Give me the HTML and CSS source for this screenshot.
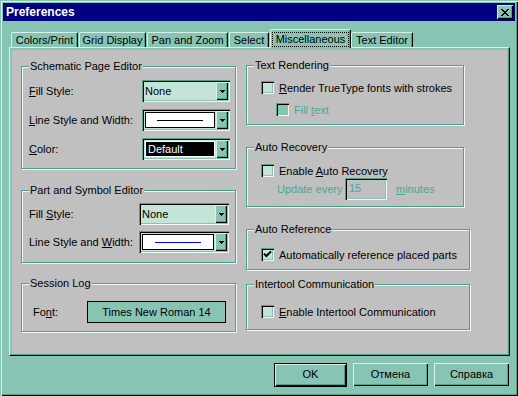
FILE: index.html
```html
<!DOCTYPE html>
<html>
<head>
  <meta charset="utf-8">
  <link rel="stylesheet" href="styles.css">
</head>
<body>
<div class="window">
  <div class="titlebar">
    <span class="title">Preferences</span>
    <span class="close">
      <svg width="8" height="7" viewBox="0 0 8 7" shape-rendering="crispEdges"><path d="M0 0h2v1h-2z M6 0h2v1h-2z M1 1h2v1h-2z M5 1h2v1h-2z M2 2h4v1h-4z M3 3h2v1h-2z M2 4h4v1h-4z M1 5h2v1h-2z M5 5h2v1h-2z M0 6h2v1h-2z M6 6h2v1h-2z" fill="#000"/></svg>
    </span>
  </div>

  <div class="tabs">
    <div class="tab t-colors">Colors/Print</div>
    <div class="tab t-grid">Grid Display</div>
    <div class="tab t-pan">Pan and Zoom</div>
    <div class="tab t-select">Select</div>
    <div class="tab active t-misc"><span class="focus">Miscellaneous</span></div>
    <div class="tab t-text">Text Editor</div>
  </div>

  <div class="panel">
    <div class="page">
      <div class="col col-left">
        <div class="group g-schematic">
          <div class="gtitle">Schematic Page Editor</div>
          <div class="field">
            <span><u>F</u>ill Style:</span>
            <div class="combo"><div class="combo-text">None</div><div class="drop"><svg width="5" height="3" shape-rendering="crispEdges"><path d="M0 0h5v1h-1v1h-1v1h-1v-1h-1v-1h-1z" fill="#000"/></svg></div></div>
          </div>
          <div class="field">
            <span><u>L</u>ine Style and Width:</span>
            <div class="combo"><div class="combo-line"><span class="line"></span></div><div class="drop"><svg width="5" height="3" shape-rendering="crispEdges"><path d="M0 0h5v1h-1v1h-1v1h-1v-1h-1v-1h-1z" fill="#000"/></svg></div></div>
          </div>
          <div class="field">
            <span><u>C</u>olor:</span>
            <div class="combo"><div class="combo-color">Default</div><div class="drop"><svg width="5" height="3" shape-rendering="crispEdges"><path d="M0 0h5v1h-1v1h-1v1h-1v-1h-1v-1h-1z" fill="#000"/></svg></div></div>
          </div>
        </div>

        <div class="group g-part">
          <div class="gtitle">Part and Symbol Editor</div>
          <div class="field">
            <span>Fill <u>S</u>tyle:</span>
            <div class="combo"><div class="combo-text">None</div><div class="drop"><svg width="5" height="3" shape-rendering="crispEdges"><path d="M0 0h5v1h-1v1h-1v1h-1v-1h-1v-1h-1z" fill="#000"/></svg></div></div>
          </div>
          <div class="field">
            <span>Line Style and <u>W</u>idth:</span>
            <div class="combo"><div class="combo-line"><span class="line line-blue"></span></div><div class="drop"><svg width="5" height="3" shape-rendering="crispEdges"><path d="M0 0h5v1h-1v1h-1v1h-1v-1h-1v-1h-1z" fill="#000"/></svg></div></div>
          </div>
        </div>

        <div class="group g-session">
          <div class="gtitle">Session Log</div>
          <div class="field">
            <span>Fo<u>n</u>t:</span>
            <div class="font-btn">Times New Roman 14</div>
          </div>
        </div>
      </div>

      <div class="col col-right">
        <div class="group g-render">
          <div class="gtitle">Text Rendering</div>
          <div class="check-row">
            <span class="check"></span>
            <span><u>R</u>ender TrueType fonts with strokes</span>
          </div>
          <div class="check-row sub disabled">
            <span class="check"></span>
            <span>Fill <u>t</u>ext</span>
          </div>
        </div>

        <div class="group g-recovery">
          <div class="gtitle">Auto Recovery</div>
          <div class="check-row">
            <span class="check"></span>
            <span>Enable <u>A</u>uto Recovery</span>
          </div>
          <div class="update-row disabled">
            <span class="update-label">Update every</span>
            <span class="edit">15</span>
            <span class="minutes"><u>m</u>inutes</span>
          </div>
        </div>

        <div class="group g-reference">
          <div class="gtitle">Auto Reference</div>
          <div class="check-row">
            <span class="check checked"><svg width="9" height="9" viewBox="0 0 9 9"><path d="M1 3.6 L3.4 6 L8 1.4" stroke="#000" stroke-width="2" fill="none"/></svg></span>
            <span>Automatically reference placed parts</span>
          </div>
        </div>

        <div class="group g-intertool">
          <div class="gtitle">Intertool Communication</div>
          <div class="check-row">
            <span class="check"></span>
            <span><u>E</u>nable Intertool Communication</span>
          </div>
        </div>
      </div>
    </div>
  </div>

  <div class="buttons">
    <div class="btn btn-default">OK</div>
    <div class="btn">Отмена</div>
    <div class="btn">Справка</div>
  </div>
</div>
</body>
</html>
```

FILE: styles.css
```css
body {
  margin: 0;
  background: #88c4b4;
  font-family: "Liberation Sans", Arial, sans-serif;
  font-size: 11px;
  color: #000;
  white-space: nowrap;
}

u {
  text-underline-offset: 1px;
}

.window {
  width: 518px;
  height: 396px;
  box-sizing: border-box;
  padding: 3px;
  background: #88c4b4;
  box-shadow: inset 1px 1px 0 #88c4b4, inset 2px 2px 0 #d8f0e8,
              inset -1px -1px 0 #000, inset -2px -2px 0 #48a48c;
}

/* title bar */
.titlebar {
  height: 18px;
  background: #000080;
  display: flex;
  align-items: center;
  justify-content: space-between;
  padding-left: 3px;
}

.title {
  color: #fff;
  font-weight: bold;
  font-size: 12px;
}

.close {
  width: 16px;
  height: 14px;
  margin-right: 2px;
  box-sizing: border-box;
  background: #88c4b4;
  display: flex;
  align-items: center;
  justify-content: center;
  box-shadow: inset 1px 1px 0 #d8f0e8, inset -1px -1px 0 #000, inset -2px -2px 0 #48a48c;
}

/* tabs */
.tabs {
  display: flex;
  align-items: flex-end;
  height: 26px;
  margin-left: 8px;
}

.tab {
  box-sizing: border-box;
  height: 15px;
  margin-right: 1px;
  border-top: 1px solid #d8f0e8;
  border-left: 1px solid #d8f0e8;
  border-right: 1px solid #000;
  border-radius: 2px 2px 0 0;
  box-shadow: inset -1px 0 0 #48a48c;
  text-align: center;
  line-height: 14px;
}

.t-colors { width: 67px; }
.t-grid { width: 67px; }
.t-pan { width: 81px; }
.t-select { width: 40px; }
.t-text { width: 62px; }

.tab.active {
  width: 81px;
  height: 19px;
  margin-right: 0;
  margin-bottom: -1px;
  padding-top: 2px;
  position: relative;
  z-index: 1;
  background: #88c4b4;
}

.focus {
  display: block;
  box-sizing: border-box;
  height: 15px;
  margin: 0 1px;
  border: 1px dotted #000;
  line-height: 12px;
}

/* tab page */
.panel {
  box-sizing: border-box;
  margin-left: 6px;
  width: 501px;
  height: 309px;
  border-top: 1px solid #d8f0e8;
  border-left: 1px solid #d8f0e8;
  border-right: 1px solid #000;
  border-bottom: 1px solid #000;
  padding: 2px 2px 1px 2px;
  box-shadow: inset -1px -1px 0 #48a48c;
}

.page {
  height: 100%;
  background: #c0c0c0;
  display: flex;
  padding-left: 9px;
}

.col {
  display: flex;
  flex-direction: column;
  align-items: flex-start;
}

.col-left { width: 215px; }
.col-right { margin-left: 10px; }

/* group boxes */
.group {
  box-sizing: border-box;
  display: flex;
  flex-direction: column;
  border: 1px solid #48a48c;
  box-shadow: inset 1px 1px 0 #eef8f4, 1px 1px 0 #eef8f4;
}

.gtitle {
  align-self: flex-start;
  margin: -8px 0 0 7px;
  padding: 0 1px;
  background: #c0c0c0;
  line-height: 14px;
}

.g-schematic { width: 215px; height: 103px; margin-top: 16px; }
.g-part { width: 215px; height: 73px; margin-top: 21px; }
.g-session { width: 215px; height: 49px; margin-top: 20px; }

.g-render { width: 218px; height: 60px; margin-top: 15px; }
.g-recovery { width: 218px; height: 60px; margin-top: 22px; }
.g-reference { width: 224px; height: 41px; margin-top: 22px; }
.g-intertool { width: 224px; height: 46px; margin-top: 14px; }

.field {
  display: flex;
  align-items: center;
  justify-content: space-between;
  height: 22px;
  padding: 0 5px 0 7px;
}

.g-schematic .field { margin-top: 7px; }
.g-schematic .field:first-of-type { margin-top: 8px; }
.g-part .field { margin-top: 6px; padding-right: 6px; }
.g-part .field:first-of-type { margin-top: 5px; }
.g-part .combo { width: 90px; }
.g-session .field { margin-top: 11px; padding: 0 9px 0 11px; }

/* combo boxes */
.combo {
  box-sizing: border-box;
  width: 88px;
  height: 22px;
  padding: 2px;
  display: flex;
  background: #c4e4d8;
  box-shadow: inset 1px 1px 0 #48a48c, inset 2px 2px 0 #000,
              inset -1px -1px 0 #eef8f4, inset -2px -2px 0 #88c4b4;
}

.combo-text {
  flex: 1;
  padding-left: 1px;
  line-height: 18px;
}

.combo-line {
  flex: 1;
  margin: 1px;
  background: #fff;
  border: 1px solid #000;
  display: flex;
  align-items: center;
  justify-content: center;
}

.line {
  width: 46px;
  height: 1px;
  background: #000;
}

.line-blue {
  background: #0000ff;
}

.combo-color {
  flex: 1;
  margin: 1px;
  background: #000;
  color: #fff;
  border: 1px solid #fff;
  padding-left: 2px;
  line-height: 14px;
}

.drop {
  box-sizing: border-box;
  width: 12px;
  height: 18px;
  background: #88c4b4;
  display: flex;
  align-items: center;
  justify-content: center;
  box-shadow: inset 1px 1px 0 #d8f0e8, inset -1px -1px 0 #000, inset -2px -2px 0 #48a48c;
}

.font-btn {
  box-sizing: border-box;
  width: 139px;
  height: 22px;
  border: 1px solid #000;
  background: #88c4b4;
  text-align: center;
  line-height: 20px;
}

/* check boxes */
.check-row {
  display: flex;
  align-items: center;
  gap: 5px;
  height: 13px;
  padding-left: 14px;
}

.g-render .check-row { margin-top: 9px; }
.g-render .check-row.sub { padding-left: 29px; }
.g-recovery .check-row { margin-top: 10px; }
.g-reference .check-row { margin-top: 12px; }
.g-intertool .check-row { margin-top: 14px; }

.check {
  box-sizing: border-box;
  width: 13px;
  height: 13px;
  padding: 2px;
  background: #c4e4d8;
  box-shadow: inset 1px 1px 0 #48a48c, inset 2px 2px 0 #000,
              inset -1px -1px 0 #eef8f4, inset -2px -2px 0 #88c4b4;
}

.check svg {
  display: block;
}

.disabled {
  color: #4ca88f;
}

.disabled .check {
  background: #88c4b4;
}

.update-row {
  display: flex;
  align-items: center;
  height: 22px;
  margin-top: 1px;
  padding-left: 30px;
}

.update-label {
  width: 68px;
}

.edit {
  box-sizing: border-box;
  width: 42px;
  height: 22px;
  padding: 2px 0 0 4px;
  line-height: 16px;
  background: #c0c0c0;
  box-shadow: inset 1px 1px 0 #48a48c, inset 2px 2px 0 #000,
              inset -1px -1px 0 #eef8f4, inset -2px -2px 0 #88c4b4;
}

.minutes {
  margin-left: 9px;
}

/* dialog buttons */
.buttons {
  display: flex;
  justify-content: flex-end;
  align-items: flex-start;
  margin-top: 7px;
  padding-right: 6px;
}

.btn {
  box-sizing: border-box;
  width: 75px;
  height: 23px;
  margin-left: 7px;
  background: #88c4b4;
  text-align: center;
  line-height: 22px;
  box-shadow: inset 1px 1px 0 #d8f0e8, inset -1px -1px 0 #000, inset -2px -2px 0 #48a48c;
}

.btn + .btn {
  margin-left: 6px;
}

.btn-default {
  width: 73px;
  height: 24px;
  margin-left: 0;
  border: 1px solid #000;
  line-height: 21px;
}
```
